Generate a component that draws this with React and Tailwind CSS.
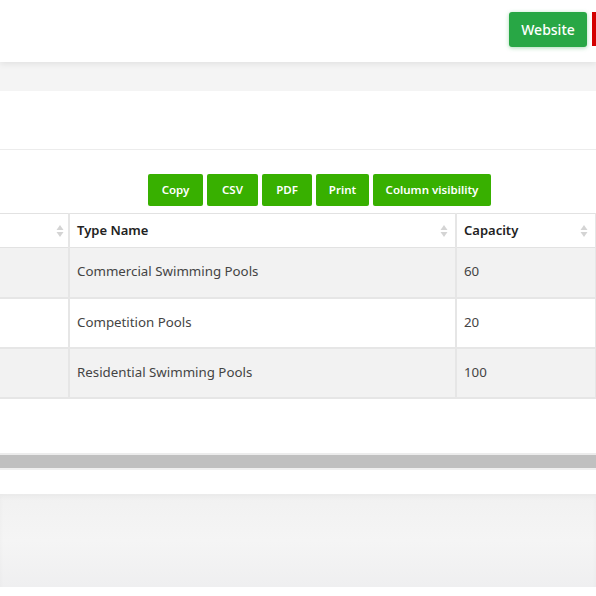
import React from "react";

const rows = [
  { name: "Commercial Swimming Pools", capacity: "60" },
  { name: "Competition Pools", capacity: "20" },
  { name: "Residential Swimming Pools", capacity: "100" },
];

const exportButtons = [
  { label: "Copy", w: "w-[55px]" },
  { label: "CSV", w: "w-[51px]" },
  { label: "PDF", w: "w-[50px]" },
  { label: "Print", w: "w-[53px]" },
  { label: "Column visibility", w: "w-[118px]" },
];

const SortIcon = () => (
  <svg width="8" height="14" viewBox="0 0 8 14" className="shrink-0">
    <path d="M4 1 L7.5 6 H0.5 Z" fill="#d4d4d4" />
    <path d="M4 13 L7.5 8 H0.5 Z" fill="#d4d4d4" />
  </svg>
);

const App = () => {
  return (
    <div
      className="w-[596px] h-[596px] overflow-hidden bg-white text-[#333]"
      style={{ fontFamily: "'Noto Sans', 'Open Sans', sans-serif" }}
    >
      {/* top bar */}
      <div className="relative z-10 h-[62px] bg-white shadow-[0_2px_6px_rgba(0,0,0,0.08)] flex items-start justify-end gap-[5px] pt-[12px]">
        <button className="h-[35px] w-[78px] rounded-[3px] bg-[#28a745] text-white text-[14px] font-medium shadow-[0_1px_4px_rgba(40,167,69,0.4)]">
          Website
        </button>
        <div className="h-[34px] w-[4px] bg-[#d40000]" />
      </div>

      <div className="h-[29px] bg-[#f4f4f4]" />

      {/* card header */}
      <div className="h-[59px] bg-white border-b border-[#ececec]" />

      {/* card body */}
      <div className="bg-white pt-[24px] h-[303px]">
        <div className="flex gap-[4px] pl-[148px]">
          {exportButtons.map((b) => (
            <button
              key={b.label}
              className={`${b.w} h-[32px] rounded-[2px] bg-[#38b000] text-white text-[11.5px] font-semibold`}
            >
              {b.label}
            </button>
          ))}
        </div>

        <table className="mt-[7px] w-[596px] border-collapse text-[13.3px] table-fixed">
          <colgroup>
            <col className="w-[69px]" />
            <col className="w-[387px]" />
            <col className="w-[140px]" />
          </colgroup>
          <thead>
            <tr className="h-[34px] border-t border-b border-[#e2e2e2]">
              <th className="border-r-2 border-[#e6e6e6] pr-[4px]">
                <div className="flex justify-end">
                  <SortIcon />
                </div>
              </th>
              <th className="border-r-2 border-[#e6e6e6] px-[7px] text-left font-semibold text-[13px] text-[#222]">
                <div className="flex items-center justify-between">
                  <span>Type Name</span>
                  <SortIcon />
                </div>
              </th>
              <th className="border-r-2 border-[#e6e6e6] px-[7px] text-left font-semibold text-[13px] text-[#222]">
                <div className="flex items-center justify-between">
                  <span>Capacity</span>
                  <SortIcon />
                </div>
              </th>
            </tr>
          </thead>
          <tbody>
            {rows.map((r, i) => (
              <tr
                key={r.name}
                className={`h-[50px] border-b-2 border-[#e6e6e6] ${
                  i % 2 === 0 ? "bg-[#f2f2f2]" : "bg-white"
                }`}
              >
                <td className="border-r-2 border-[#e6e6e6]" />
                <td className="border-r-2 border-[#e6e6e6] px-[7px] text-[#444]">
                  {r.name}
                </td>
                <td className="border-r-2 border-[#e6e6e6] px-[7px] text-[#444]">
                  {r.capacity}
                </td>
              </tr>
            ))}
          </tbody>
        </table>
      </div>

      {/* scrollbar */}
      <div className="border-t-2 border-[#ececec] h-[15px] bg-[#c0c0c0]" />
      <div className="h-[26px] bg-white border-t-2 border-[#f0f0f0]" />

      {/* footer area */}
      <div className="h-[93px] bg-gradient-to-b from-[#f1f1f1] via-[#f5f5f5] to-[#efeff0] shadow-[inset_0_3px_4px_rgba(0,0,0,0.03)]" />
      <div className="h-[9px] bg-white" />
    </div>
  );
};

export default App;
